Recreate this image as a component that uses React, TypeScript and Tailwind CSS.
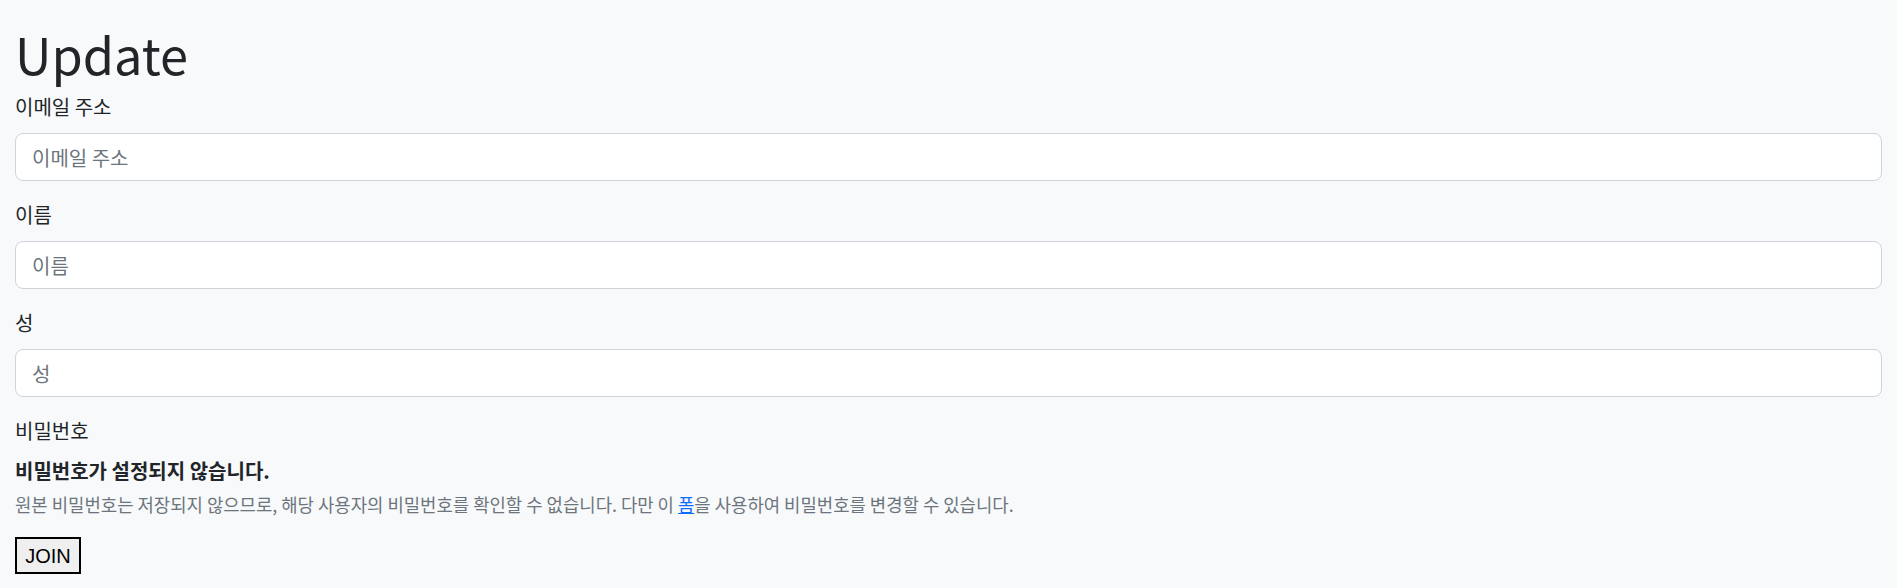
export default function App() {
  const fields = [
    { label: "이메일 주소", type: "email" },
    { label: "이름", type: "text" },
    { label: "성", type: "text" },
  ];

  return (
    <div className="min-h-screen bg-[#f8f9fa] px-[15px] pt-[23px] text-[#212529] font-['Noto_Sans_CJK_KR','Noto_Sans',sans-serif]">
      <h1 className="text-[50.5px] font-normal leading-[60px] mb-[9px]">Update</h1>
      <form className="flex flex-col">
        {fields.map((f) => (
          <div key={f.label} className="mb-[19px]">
            <label className="block text-[20px] leading-[30px] mb-[11px]">{f.label}</label>
            <input
              type={f.type}
              placeholder={f.label}
              className="block w-full h-[48px] rounded-lg border border-[#ced4da] bg-white px-4 text-[20px] text-[#212529] placeholder:text-[#6c757d] outline-none"
            />
          </div>
        ))}
        <div>
          <label className="block text-[20px] leading-[30px] mb-[10px]">비밀번호</label>
          <div className="text-[20px] font-bold leading-[30px]">비밀번호가 설정되지 않습니다.</div>
          <p className="text-[17.8px] leading-[26px] text-[#6c757d] mt-[5px]">
            원본 비밀번호는 저장되지 않으므로, 해당 사용자의 비밀번호를 확인할 수 없습니다. 다만 이{" "}
            <a href="#" className="text-[#0d6efd] underline">폼</a>을 사용하여 비밀번호를 변경할 수 있습니다.
          </p>
        </div>
        <div className="mt-[20px]">
          <button
            type="button"
            className="h-[37px] w-[66px] border-2 border-black bg-[#efefef] text-[20px] text-black font-['Liberation_Sans',Arial,sans-serif]"
          >
            JOIN
          </button>
        </div>
      </form>
    </div>
  );
}
